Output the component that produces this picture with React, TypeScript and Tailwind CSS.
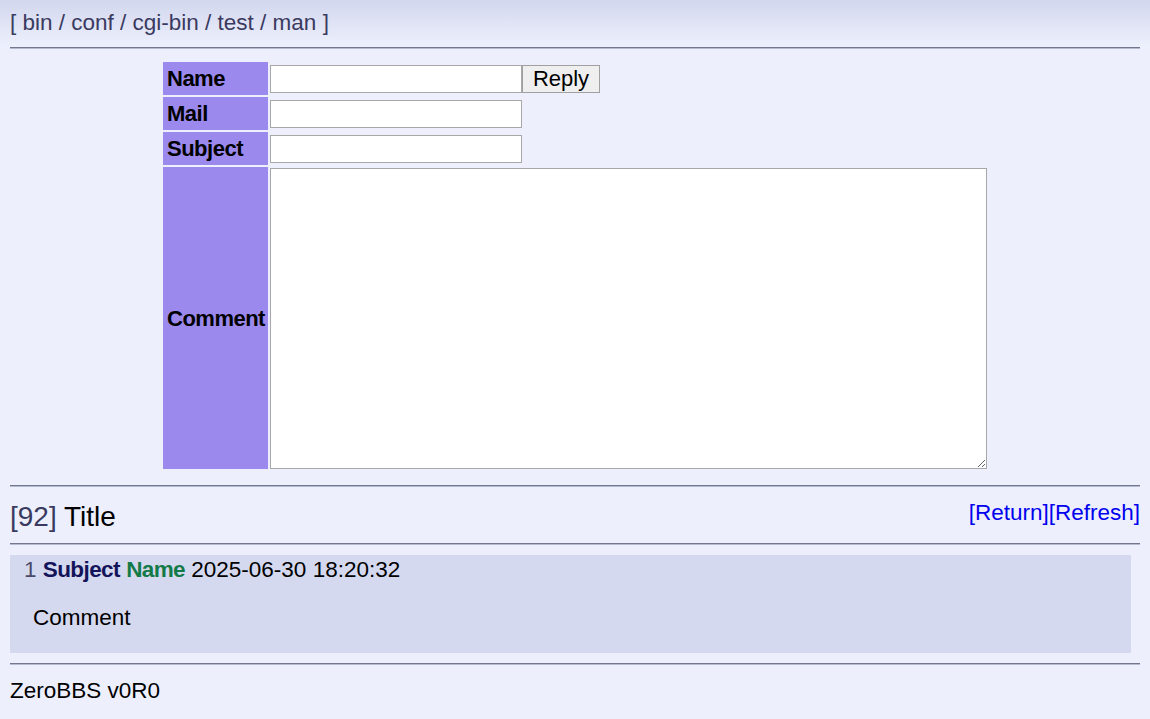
import React from "react";

function Hr() {
  return <div className="mx-[10px] h-[2px] border-t border-t-[#737890] border-b border-b-[#b4bad0]" />;
}

export default function App() {
  return (
    <div
      className="min-h-[719px] bg-[#edf0fc] text-black text-[22.5px] leading-[25px]"
      style={{ fontFamily: '"Liberation Sans", Arial, sans-serif' }}
    >
      <div className="h-[47px] bg-gradient-to-b from-[#d3d7ee] to-[#edf0fc] pl-[10px] pt-[10px] text-[#3a3a60]">
        [ bin / conf / cgi-bin / test / man ]
      </div>
      <Hr />
      <div className="pt-[13px]">
        <div className="mx-auto grid w-[824px] grid-cols-[105px_717px] gap-[2px]">
          <div className="flex h-[33px] items-center bg-[#9b89ee] pl-[4px] text-[22px] font-bold tracking-[-0.5px]">Name</div>
          <div className="flex h-[33px] items-center">
            <input className="h-[28px] w-[252px] border border-[#a8a8a8] bg-white px-1 outline-none" />
            <button className="h-[28px] w-[78px] border border-[#a0a0a0] bg-[#efefef] text-[22px] leading-[25px]">Reply</button>
          </div>
          <div className="flex h-[33px] items-center bg-[#9b89ee] pl-[4px] text-[22px] font-bold tracking-[-0.5px]">Mail</div>
          <div className="flex h-[33px] items-center">
            <input className="h-[28px] w-[252px] border border-[#a8a8a8] bg-white px-1 outline-none" />
          </div>
          <div className="flex h-[33px] items-center bg-[#9b89ee] pl-[4px] text-[22px] font-bold tracking-[-0.5px]">Subject</div>
          <div className="flex h-[33px] items-center">
            <input className="h-[28px] w-[252px] border border-[#a8a8a8] bg-white px-1 outline-none" />
          </div>
          <div className="flex h-[302px] items-center bg-[#9b89ee] pl-[4px] text-[22px] font-bold tracking-[-0.5px]">Comment</div>
          <div className="flex h-[302px] items-end">
            <textarea className="h-[301px] w-[717px] resize border border-[#a8a8a8] bg-white outline-none" />
          </div>
        </div>
      </div>
      <div className="h-[16px]" />
      <Hr />
      <div className="flex h-[56px] items-center justify-between px-[10px]">
        <div className="text-[28px] leading-[30px] pt-[4px]">
          <span className="text-[#3a3a60]">[92]</span> Title
        </div>
        <div className="pb-[6px] text-[#0000ee]">
          <a href="#" className="text-[#0000ee]">[Return]</a>
          <a href="#" className="text-[#0000ee]">[Refresh]</a>
        </div>
      </div>
      <Hr />
      <div className="ml-[10px] mr-[19px] mt-[10px] h-[98px] bg-[#d5d9ef] pt-[2px]">
        <div className="pl-[14px]">
          <span className="text-[#4a4a6a]">1</span>{" "}
          <span className="font-bold tracking-[-0.6px] text-[#14145a]">Subject</span>{" "}
          <span className="font-bold tracking-[-0.6px] text-[#137a48]">Name</span>{" "}
          <span>2025-06-30 18:20:32</span>
        </div>
        <div className="pl-[23px] pt-[23px]">Comment</div>
      </div>
      <div className="h-[10px]" />
      <Hr />
      <div className="pl-[10px] pt-[13px]">ZeroBBS v0R0</div>
    </div>
  );
}
